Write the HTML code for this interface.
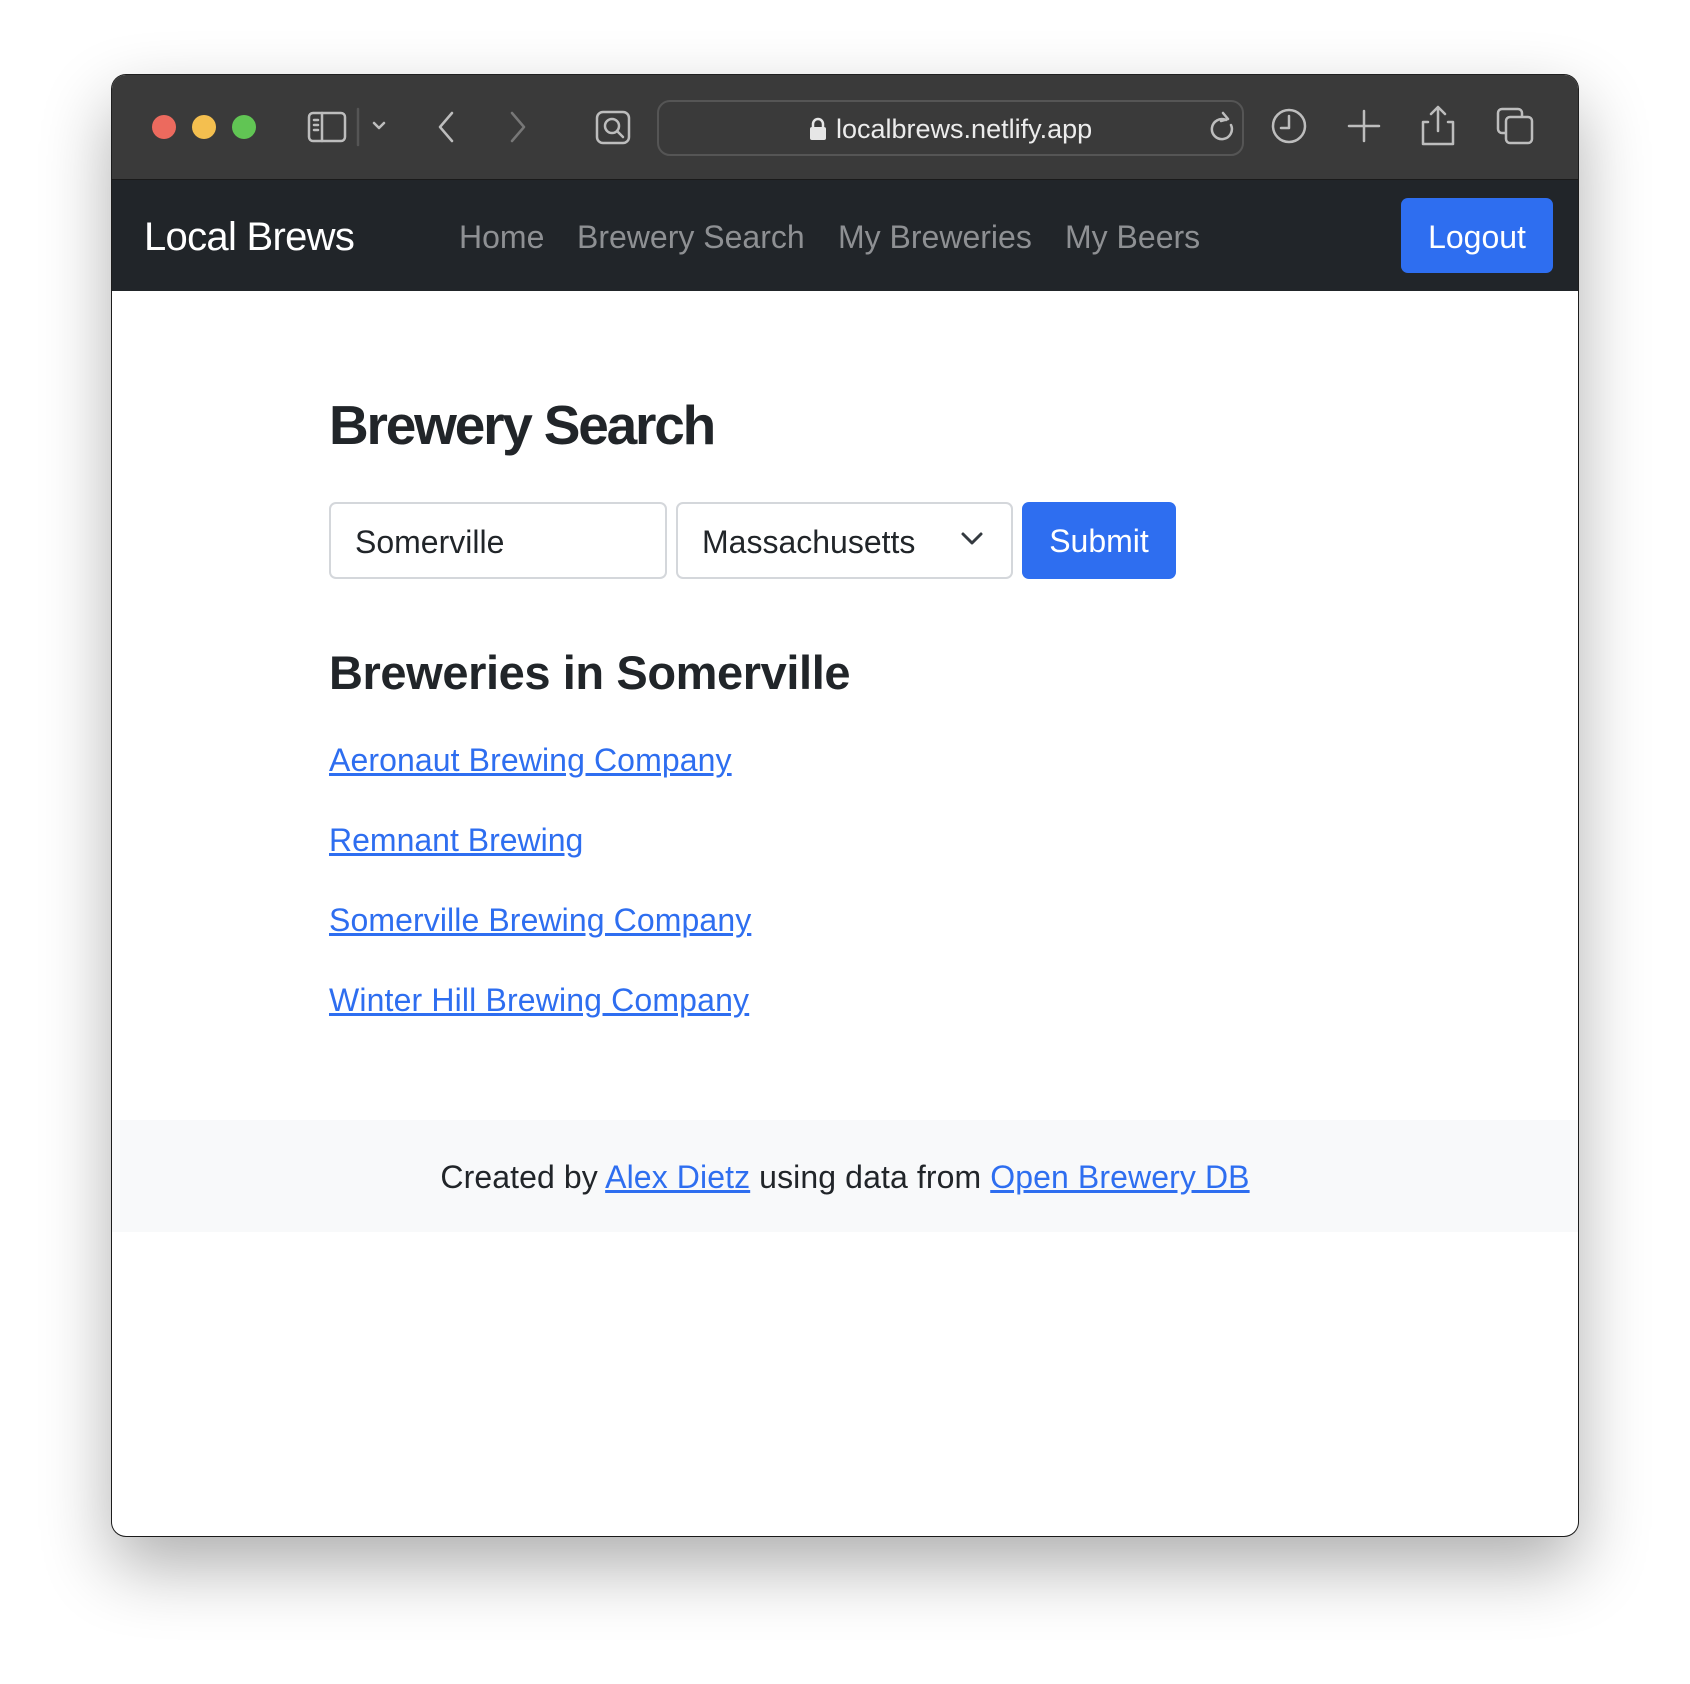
<!DOCTYPE html>
<html><head><meta charset="utf-8"><style>
*{margin:0;padding:0;box-sizing:border-box}
body{width:1690px;height:1684px;background:#fff;position:relative;overflow:hidden;font-family:"Liberation Sans",sans-serif}
.win{position:absolute;left:112px;top:75px;width:1466px;height:1461px;border-radius:14px;background:#fff;box-shadow:0 30px 70px rgba(0,0,0,.32),0 0 0 1px #222;overflow:hidden}
.tb{position:absolute;left:0;top:0;width:100%;height:105px;background:#3a3a3a;border-bottom:1px solid #1a1a1a}
.dot{position:absolute;top:40px;width:24px;height:24px;border-radius:50%}
.nav{position:absolute;left:0;top:105px;width:100%;height:111px;background:#212529}
.abs{position:absolute;white-space:nowrap}
.nl{color:#8e9093;font-size:32px;top:39px}
a{color:#2e6ef0;text-decoration:underline}
.inp{position:absolute;top:427px;height:77px;border:2px solid #d4d7db;border-radius:7px;font-size:32px;color:#212529;padding:20px 24px}
.lk{font-size:32px;left:217px}
</style></head><body>
<div class="win">
 <div class="tb">
  <div class="dot" style="left:40px;background:#ec6a5e"></div>
  <div class="dot" style="left:80px;background:#f4bf4f"></div>
  <div class="dot" style="left:120px;background:#61c554"></div>
  <svg class="abs" style="left:0;top:0" width="1466" height="105" fill="none" stroke="#bdbdbd" stroke-width="2.5" stroke-linecap="round" stroke-linejoin="round">
   <rect x="197" y="38" width="36" height="28" rx="4"/><line x1="210" y1="38" x2="210" y2="66"/><line x1="202" y1="45" x2="206" y2="45"/><line x1="202" y1="50" x2="206" y2="50"/><line x1="202" y1="55" x2="206" y2="55"/>
   <line x1="246" y1="34" x2="246" y2="70" stroke="#555"/>
   <path d="M262 48l5 5 5-5"/>
   <path d="M340 38l-12 14 12 14"/>
   <path d="M400 38l12 14-12 14" stroke="#777"/>
   <rect x="485" y="37" width="32" height="31" rx="6"/><circle cx="500" cy="51" r="7"/><line x1="505" y1="56" x2="511" y2="62"/>
   <rect x="546" y="26" width="585" height="54" rx="12" stroke="#555" stroke-width="2"/>
   <path d="M1114 45a10 10 0 1 0 5 5M1111 38l5 6-7 2"/>
   <circle cx="1177" cy="51" r="16"/><path d="M1177 41v12h-8"/>
   <path d="M1252 36v30M1237 51h30"/>
   <path d="M1316 47h-5v22h30v-22h-5M1326 32v24M1319 39l7-7 7 7"/>
   <rect x="1386" y="34" width="24" height="24" rx="4"/><rect x="1394" y="42" width="26" height="26" rx="4" fill="#3a3a3a"/>
  </svg>
  <svg class="abs" style="left:697px;top:41px" width="18" height="26"><rect x="1" y="11" width="16" height="13" rx="2" fill="#e6e6e6"/><path d="M4 11V8a5 5 0 0 1 10 0v3" stroke="#e6e6e6" stroke-width="2.5" fill="none"/></svg>
  <div class="abs" style="left:724px;top:39px;font-size:27px;color:#ececec">localbrews.netlify.app</div>
 </div>
 <div class="nav">
  <div class="abs" style="left:32px;top:35px;font-size:40px;color:#fff;letter-spacing:-0.7px">Local Brews</div>
  <div class="abs nl" style="left:347px">Home</div>
  <div class="abs nl" style="left:465px">Brewery Search</div>
  <div class="abs nl" style="left:726px">My Breweries</div>
  <div class="abs nl" style="left:953px">My Beers</div>
  <div class="abs" style="left:1289px;top:18px;width:152px;height:75px;background:#2e6ef0;border-radius:7px;color:#fff;font-size:32px;text-align:center;line-height:78px">Logout</div>
 </div>
 <div class="abs" style="left:217px;top:318px;font-size:55px;font-weight:bold;color:#212529;letter-spacing:-2.2px">Brewery Search</div>
 <div class="inp" style="left:217px;width:338px">Somerville</div>
 <div class="inp" style="left:564px;width:337px">Massachusetts
  <svg class="abs" style="left:282px;top:26px" width="24" height="16" fill="none" stroke="#343a40" stroke-width="3" stroke-linecap="round" stroke-linejoin="round"><path d="M3 4l9 9 9-9"/></svg></div>
 <div class="abs" style="left:910px;top:427px;width:154px;height:77px;background:#2e6ef0;border-radius:7px;color:#fff;font-size:32px;text-align:center;line-height:79px">Submit</div>
 <div class="abs" style="left:217px;top:570px;font-size:47px;font-weight:bold;color:#212529;letter-spacing:-0.4px">Breweries in Somerville</div>
 <a class="abs lk" style="top:667px;letter-spacing:0.1px">Aeronaut Brewing Company</a>
 <a class="abs lk" style="top:747px">Remnant Brewing</a>
 <a class="abs lk" style="top:827px;letter-spacing:0.1px">Somerville Brewing Company</a>
 <a class="abs lk" style="top:907px;letter-spacing:0.15px">Winter Hill Brewing Company</a>
 <div class="abs" style="left:0;top:1045px;width:100%;height:112px;background:#f8f9fa;text-align:center;font-size:32px;color:#212529;line-height:114px;letter-spacing:0.1px">Created by <a>Alex Dietz</a> using data from <a>Open Brewery DB</a></div>
</div>
</body></html>
